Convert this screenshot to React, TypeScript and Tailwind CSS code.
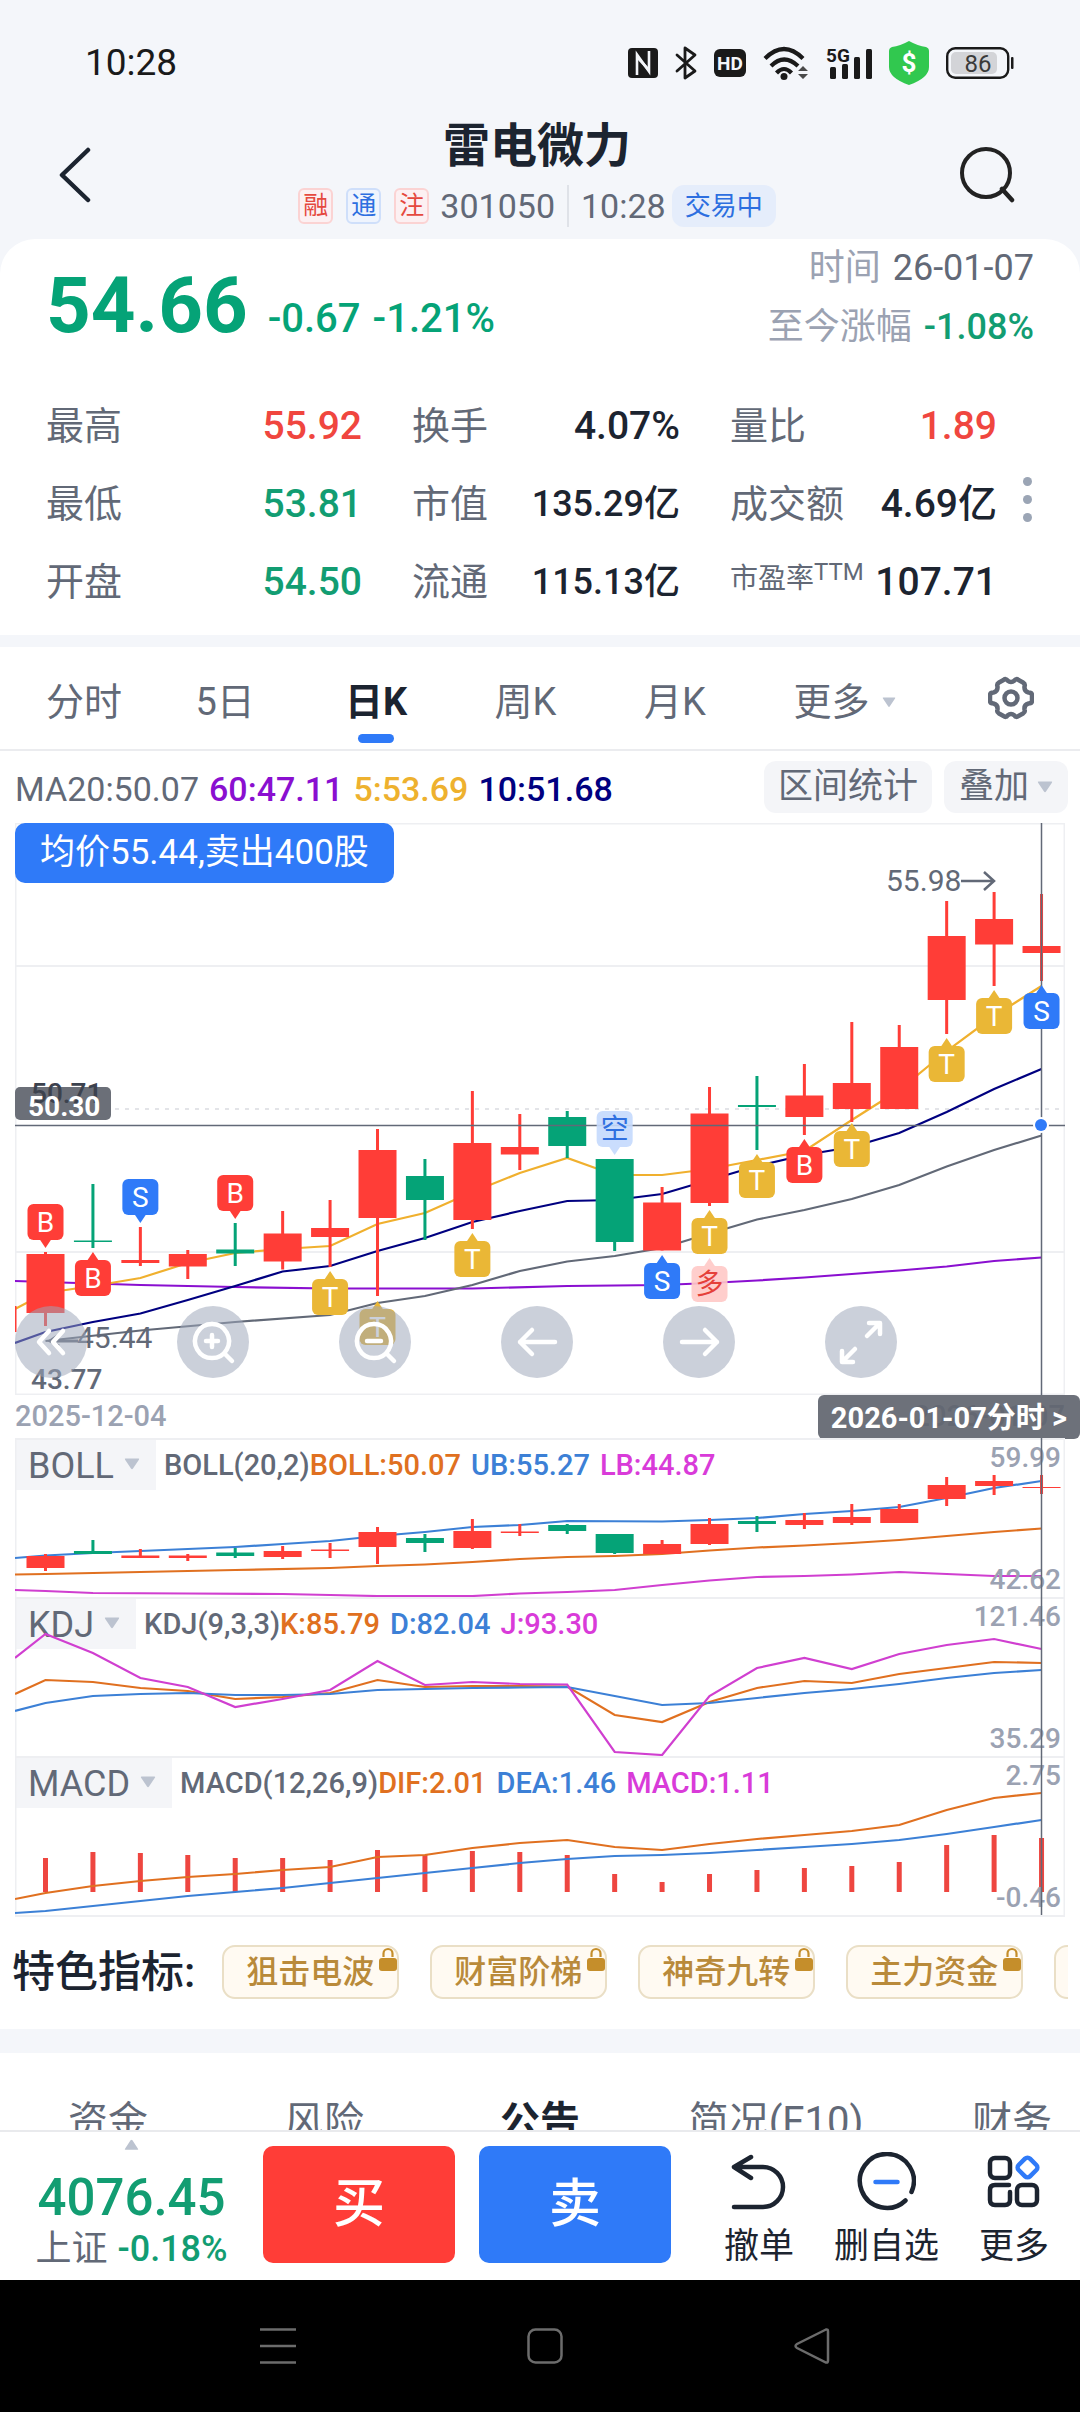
// ============================================================
//  App.tsx — STOCK DETAIL PAGE (daily K-line)
// ============================================================
//
//  • Status bar + title header
//  • Quote card (price, change, key figures)
//  • Period tabs, moving averages, candle chart
//  • BOLL / KDJ / MACD panels
//  • Feature indicators, info tabs, trade bar
//
//  Charts use a 1050-wide viewBox. Candle i sits at x = 30.5 + 47.43 * i.
//
// ============================================================

import { useState } from "react";
import type { ReactNode } from "react";

// ── COLOURS ────────────────────────────────────────────────
const RED = "#ff3d37";
const GREEN = "#05a377";
const BLUE = "#2f7af8";
const GOLD = "#eab736";
const SLATE = "#626977";

// ── CHART DATA ─────────────────────────────────────────────
type Candle = [high: number, top: number, bottom: number, low: number, color: string];
type Point = [index: number, y: number];

// Index of the left chart edge, used to start lines off-screen
const EDGE = -0.643;

const mainCandles: Candle[] = [
  [429, 431, 490, 503, RED],
  [361, 417.5, 419, 425, GREEN],
  [404, 437, 440, 443, RED],
  [427, 431, 443.5, 456, RED],
  [400, 426.5, 430.5, 443, GREEN],
  [388, 410.5, 438.5, 446.5, RED],
  [377, 405, 414, 444, RED],
  [306, 327, 395, 473, RED],
  [336, 353, 377, 417, GREEN],
  [268, 320, 397, 406, RED],
  [291, 324, 331.5, 347, RED],
  [288, 294, 323, 335, GREEN],
  [336, 336, 419, 428, GREEN],
  [364, 379.5, 427.5, 427.5, RED],
  [264, 290.5, 380, 383, RED],
  [253, 282, 284, 327, GREEN],
  [241, 272.5, 294, 312, RED],
  [199, 260, 286, 299, RED],
  [202, 224, 286, 286, RED],
  [78, 113, 177, 211, RED],
  [69, 96, 121.5, 163, RED],
  [71, 123, 130, 158, RED],
];

const ma5: Point[] = [
  [EDGE, 486], [0, 470], [1, 463], [2, 455], [3, 440], [4, 430], [5, 426], [6, 423], [7, 401],
  [8, 390], [9, 369], [10, 350], [11, 335], [12, 352], [13, 352], [14, 346], [15, 337],
  [16, 328], [17, 297], [18, 267], [19, 228], [20, 193], [21, 163],
];
const ma10: Point[] = [
  [EDGE, 520], [0, 509], [1, 499], [2, 490.5], [3, 477], [4, 463], [5, 448.5], [6, 443], [7, 428],
  [8, 415], [9, 399], [10, 388], [11, 378], [12, 377], [13, 371], [14, 357], [15, 343],
  [16, 332], [17, 324], [18, 310], [19, 289], [20, 266], [21, 246],
];
const ma20: Point[] = [
  [0, 518], [2, 507.5], [4, 499], [6, 492], [7, 480], [8, 473], [9, 462], [10, 448], [11, 438.5],
  [12, 433], [13, 425], [14, 410.5], [15, 396.5], [16, 387], [17, 376], [18, 362], [19, 343.5],
  [20, 327], [21, 312.5],
];
const ma60: Point[] = [
  [EDGE, 458], [0, 459], [2, 462], [4, 464], [6, 465.5], [9, 465.5], [11, 463], [13, 462],
  [14, 460], [15, 457.5], [16, 454.5], [17, 451], [18, 447.5], [19, 443.5], [20, 438], [21, 434.5],
];

// Trade markers: which candle, top of the box, letter, pointer side
type Marker = { i: number; y: number; t: string; dir: "up" | "down"; bg: string; fg?: string };
const markers: Marker[] = [
  { i: 0, y: 381, t: "B", dir: "down", bg: RED },
  { i: 1, y: 437, t: "B", dir: "up", bg: RED },
  { i: 2, y: 356, t: "S", dir: "down", bg: BLUE },
  { i: 4, y: 352, t: "B", dir: "down", bg: RED },
  { i: 6, y: 456, t: "T", dir: "up", bg: GOLD },
  { i: 7, y: 486, t: "T", dir: "up", bg: GOLD },
  { i: 9, y: 418, t: "T", dir: "up", bg: GOLD },
  { i: 12, y: 288, t: "空", dir: "down", bg: "#c5dafd", fg: "#2f6fe0" },
  { i: 13, y: 440, t: "S", dir: "up", bg: BLUE },
  { i: 14, y: 395, t: "T", dir: "up", bg: GOLD },
  { i: 14, y: 443, t: "多", dir: "up", bg: "#ffc9c7", fg: "#e5403a" },
  { i: 15, y: 339, t: "T", dir: "up", bg: GOLD },
  { i: 16, y: 324, t: "B", dir: "up", bg: RED },
  { i: 17, y: 308, t: "T", dir: "up", bg: GOLD },
  { i: 19, y: 223, t: "T", dir: "up", bg: GOLD },
  { i: 20, y: 175, t: "T", dir: "up", bg: GOLD },
  { i: 21, y: 170, t: "S", dir: "up", bg: BLUE },
];

const bollCandles: Candle[] = [
  [116, 118, 130, 133, RED],
  [102, 113, 116, 116, GREEN],
  [111, 117.5, 120, 120, RED],
  [116, 117.5, 120, 123, RED],
  [110, 114.5, 118, 120, GREEN],
  [108, 113, 119, 121, RED],
  [105, 111.5, 113, 120, RED],
  [89, 94, 109, 126, RED],
  [96, 100, 105, 114, GREEN],
  [81, 93, 110, 111, RED],
  [86, 93.5, 95, 98, RED],
  [86, 87, 93, 96, GREEN],
  [96, 96, 115, 116, GREEN],
  [102, 106, 116, 116, RED],
  [80, 86, 106, 107, RED],
  [78, 83, 86, 94, GREEN],
  [75, 82, 87, 91, RED],
  [66, 79, 85, 87, RED],
  [66, 71, 85, 85, RED],
  [39, 47, 61, 68, RED],
  [37, 43, 48, 57, RED],
  [37, 49, 50, 56, RED],
];
const bollUp: Point[] = [
  [EDGE, 120], [0, 117.5], [1, 115], [2, 113], [3, 111], [4, 109], [5, 106], [6, 103], [7, 98],
  [8, 94], [9, 89], [10, 87], [11, 83], [13, 83.5], [14, 82], [15, 80], [16, 76], [17, 73],
  [18, 69], [19, 60], [20, 50], [21, 43],
];
const bollMid: Point[] = [
  [EDGE, 136.5], [0, 136], [2, 134], [4, 132], [6, 130], [7, 128], [8, 126.5], [9, 124], [10, 121],
  [11, 119], [12, 118], [13, 116], [14, 112.5], [15, 109.5], [16, 107.5], [17, 105], [18, 102],
  [19, 98], [20, 94], [21, 90.5],
];
const bollLow: Point[] = [
  [EDGE, 152], [0, 153], [1, 155], [3, 155.5], [5, 156], [6, 157], [7, 158], [9, 158], [10, 155.5],
  [11, 154], [12, 152], [13, 147], [14, 142.5], [15, 139], [16, 138], [17, 136.5], [18, 134],
  [19, 136], [20, 138], [21, 138],
];

const kdjJ = [37, 56, 81, 90, 110, 102, 93, 64, 88, 85, 87, 87.5, 155, 158, 99, 71, 61, 72, 57, 48, 42, 52];
const kdjK = [83, 85, 91, 94, 102, 100, 96, 83, 90, 89, 89, 89.5, 118, 125, 105, 91, 84, 86, 77, 71, 65, 66];
const kdjD = [106, 99, 97, 96, 98, 98, 97, 93, 92, 91, 90.5, 90, 99, 108, 106, 101, 96, 92, 87, 81, 76, 73];

const macdBars = [
  102, 96, 97, 99, 102, 102, 104, 94, 99, 95, 96, 99, 118, 126, 118, 114, 112, 110, 106, 89, 79, 82,
];
const macdDif = [
  137, 130, 125, 121, 118, 114, 111, 101, 99, 92, 87, 84, 91, 94, 88, 83, 79, 75, 69, 54, 42, 37,
];
const macdDea = [
  155, 150, 145, 140, 136, 132, 127, 122, 117, 112, 107, 103, 100, 99, 97, 94, 91, 88, 84, 78, 71, 64,
];

// ── HELPERS ────────────────────────────────────────────────
const cx = (i: number) => 30.5 + 47.43 * i;
const toPoints = (pts: Point[]) => pts.map(([i, y]) => `${cx(i).toFixed(1)},${y}`).join(" ");
const fromEdge = (first: number, ys: number[]): Point[] => [
  [EDGE, first],
  ...ys.map((y, i): Point => [i, y]),
];

function Line({ pts, color }: { pts: Point[]; color: string }) {
  return <polyline points={toPoints(pts)} fill="none" stroke={color} strokeWidth="2.2" />;
}

function Candles({ data }: { data: Candle[] }) {
  return (
    <g>
      {data.map(([high, top, bottom, low, color], i) => (
        <g key={i} fill={color}>
          <rect x={cx(i) - 1.5} y={high} width="3" height={low - high} />
          <rect x={cx(i) - 19} y={top} width="38" height={bottom - top} />
        </g>
      ))}
    </g>
  );
}

function Caret({ className }: { className?: string }) {
  return (
    <svg viewBox="0 0 16 12" className={className} aria-hidden="true">
      <path d="M1.5 0.5h13q1.2 0 .4 1.2L9 10.6q-1 1.4-2 0L1.1 1.7Q.3.5 1.5.5z" fill="#bcc3d0" />
    </svg>
  );
}

// ── STATUS BAR ─────────────────────────────────────────────
function StatusBar() {
  return (
    <div className="flex h-[122px] items-center justify-between pl-[85px] pr-[66px] pt-[3px] text-[#1a1a1a]">
      <span className="text-[37px] leading-[40px]">10:28</span>
      <div className="flex items-center gap-[17px]">
        {/* NFC */}
        <svg viewBox="0 0 30 30" className="w-[30px]" aria-label="NFC">
          <rect width="30" height="30" rx="4" fill="#1a1a1a" />
          <path d="M9 27V6.500l12 17V3" fill="none" stroke="#f4f6fa" strokeWidth="2.600" />
          <path d="M9 7l12 13v4L9 11z" fill="#f4f6fa" />
        </svg>
        {/* Bluetooth */}
        <svg viewBox="0 0 22 34" className="w-[22px]" aria-label="Bluetooth">
          <path
            d="M2 9l18 16-10 7V2l10 7L2 25"
            fill="none" stroke="#1a1a1a" strokeWidth="2.8" strokeLinejoin="round" strokeLinecap="round"
          />
        </svg>
        <svg viewBox="0 0 32 28" className="w-[32px]" aria-label="HD">
          <rect width="32" height="28" rx="6" fill="#1a1a1a" />
          <text x="16" y="21" textAnchor="middle" fill="#f4f6fa" className="text-[19px] font-bold">HD</text>
        </svg>
        {/* Wi-Fi */}
        <svg viewBox="0 0 46 34" className="w-[46px]" aria-label="Wi-Fi">
          <g fill="none" stroke="#1a1a1a" strokeWidth="4.200">
            <path d="M2 12.500q19-19 38 0" />
            <path d="M8 20q13-13 27 0" />
            <path d="M13.500 27q7.500-8 15 0" />
          </g>
          <circle cx="21" cy="30.500" r="3.500" fill="#1a1a1a" />
          <path d="M35 25l5-5 5 5zM35 28l5 5 5-5z" fill="#4a4a4a" />
        </svg>
        {/* 5G signal */}
        <svg viewBox="0 0 46 33" className="w-[46px]" aria-label="5G signal">
          <text x="0" y="16" fill="#1a1a1a" className="text-[19px] font-bold">5G</text>
          <g fill="#1a1a1a">
            <rect x="4" y="21" width="6" height="12" rx="1.500" />
            <rect x="16" y="18" width="6" height="15" rx="1.500" />
            <rect x="28" y="11" width="6" height="22" rx="1.500" />
            <rect x="40" y="3" width="6" height="30" rx="1.500" />
          </g>
        </svg>
        {/* Payment shield */}
        <svg viewBox="0 0 40 44" className="w-[40px]" aria-label="Payment protection">
          <path d="M20 0q9 5 17 6 3 1 3 4v16q0 11-20 18Q0 37 0 26V10q0-3 3-4 8-1 17-6z" fill="#31c84f" />
          <text x="20" y="31" textAnchor="middle" fill="#fff" className="text-[26px] font-bold">$</text>
        </svg>
        {/* Battery */}
        <svg viewBox="0 0 68 32" className="w-[68px]" aria-label="Battery 86%">
          <rect x="1.200" y="1.200" width="61" height="29.600" rx="8" fill="none" stroke="#1a1a1a" strokeWidth="2.400" />
          <rect x="5" y="5" width="46" height="22" rx="5" fill="#d3d4d8" />
          <rect x="65" y="10" width="2.500" height="12" rx="1" fill="#1a1a1a" />
          <text x="32" y="24.500" textAnchor="middle" fill="#3a3a3a" className="text-[24px]">86</text>
        </svg>
      </div>
    </div>
  );
}

// ── HEADER ─────────────────────────────────────────────────
function Header() {
  return (
    <header className="grid grid-cols-[1fr_auto_1fr] items-center pb-3 pl-[58px] pr-[64px]">
      <button aria-label="返回" className="justify-self-start">
        <svg viewBox="0 0 34 56" className="w-[34px]">
          <path d="M30 3L4 28l26 25" fill="none" stroke="#1c2430" strokeWidth="4.500" strokeLinecap="round" strokeLinejoin="round" />
        </svg>
      </button>
      <div className="flex flex-col items-center">
        <h1 className="text-[47px] font-bold leading-[48px] text-[#1c2430]">雷电微力</h1>
        <div className="mt-[15px] flex h-[42px] items-center text-[34px] leading-[42px] text-[#626977]">
          <div className="flex gap-[13px] text-[25px] leading-[32px]">
            <span className="rounded-[6px] border-2 border-[#fbd3d3] bg-[#fcf0f2] px-[3px] text-[#e5493f]">融</span>
            <span className="rounded-[6px] border-2 border-[#cfdffa] bg-[#eff4fd] px-[3px] text-[#2d6fe0]">通</span>
            <span className="rounded-[6px] border-2 border-[#fbd3d3] bg-[#fcf0f2] px-[3px] text-[#e5493f]">注</span>
          </div>
          <span className="ml-[11px]">301050</span>
          <span className="mx-[12px] h-[42px] w-[2px] bg-[#dfe2e8]" />
          <span>10:28</span>
          <span className="ml-[6px] rounded-[12px] bg-[#e5edfb] px-[13px] text-[26px] leading-[42px] text-[#2d6fe0]">
            交易中
          </span>
        </div>
      </div>
      <button aria-label="搜索" className="justify-self-end">
        <svg viewBox="0 0 58 56" className="w-[58px]">
          <circle cx="28" cy="26" r="24" fill="none" stroke="#222" strokeWidth="4" />
          <path d="M44 42l10 11" stroke="#222" strokeWidth="4.500" strokeLinecap="round" />
        </svg>
      </button>
    </header>
  );
}

// ── QUOTE CARD ─────────────────────────────────────────────
const stats: { label: ReactNode; value: string; color: string }[] = [
  { label: "最高", value: "55.92", color: "text-[39px] text-[#f0463f]" },
  { label: "换手", value: "4.07%", color: "text-[39px] text-[#1c2430]" },
  { label: "量比", value: "1.89", color: "text-[39px] text-[#f0463f]" },
  { label: "最低", value: "53.81", color: "text-[39px] text-[#129d72]" },
  { label: "市值", value: "135.29亿", color: "text-[36px] text-[#1c2430]" },
  { label: "成交额", value: "4.69亿", color: "text-[39px] text-[#1c2430]" },
  { label: "开盘", value: "54.50", color: "text-[39px] text-[#129d72]" },
  { label: "流通", value: "115.13亿", color: "text-[36px] text-[#1c2430]" },
  {
    label: (
      <span className="flex text-[28px]">
        市盈率<span className="pb-5 text-[24px] leading-[28px]">TTM</span>
      </span>
    ),
    value: "107.71",
    color: "text-[39px] text-[#1c2430]",
  },
];

function QuoteCard() {
  return (
    <section className="rounded-t-[35px] bg-white pb-[14px]">
      <div className="flex h-[148px] justify-between px-[46px]">
        <div className="flex items-baseline pt-[27px] text-[#05a377]">
          <span className="text-[78px] font-bold leading-[80px]">54.66</span>
          <span className="ml-[20px] text-[40px] font-medium">-0.67</span>
          <span className="ml-[12px] text-[40px] font-medium">-1.21%</span>
        </div>
        <dl className="text-right text-[36px] leading-[59px]">
          <div className="flex justify-end gap-[12px]">
            <dt className="text-[#9ba2b2]">时间</dt>
            <dd className="text-[#626977]">26-01-07</dd>
          </div>
          <div className="flex justify-end gap-[12px]">
            <dt className="text-[#9ba2b2]">至今涨幅</dt>
            <dd className="font-medium text-[#129d72]">-1.08%</dd>
          </div>
        </dl>
      </div>

      <div className="flex items-center">
        <dl className="grid flex-1 grid-cols-[316fr_268fr_267fr] gap-x-[50px] pl-[46px]">
          {stats.map((s, i) => (
            <div key={i} className="flex h-[78px] items-center justify-between whitespace-nowrap">
              <dt className="text-[38px] text-[#626977]">{s.label}</dt>
              <dd className={`font-medium ${s.color}`}>{s.value}</dd>
            </div>
          ))}
        </dl>
        <button aria-label="更多指标" className="flex w-[83px] flex-col gap-[9px] pb-[9px] pl-[26px]">
          <span className="size-[9px] rounded-full bg-[#9ba5b5]" />
          <span className="size-[9px] rounded-full bg-[#9ba5b5]" />
          <span className="size-[9px] rounded-full bg-[#9ba5b5]" />
        </button>
      </div>
    </section>
  );
}

// ── PERIOD TABS ────────────────────────────────────────────
const periods = ["分时", "5日", "日K", "周K", "月K", "更多"];

function PeriodTabs() {
  const [active, setActive] = useState("日K");
  return (
    <nav className="flex h-[104px] items-center border-b-2 border-[#ebecef] bg-white pl-[46px]">
      <div className="grid h-full flex-1 grid-cols-6">
        {periods.map((p) => (
          <button
            key={p}
            onClick={() => setActive(p)}
            className={
              active === p
                ? "flex items-center text-[38px] font-bold text-[#1c2430]"
                : "flex items-center text-[38px] text-[#626977]"
            }
          >
            <span className="relative flex h-full items-center whitespace-nowrap pt-[8px]">
              {p}
              {p === "更多" && <Caret className="ml-[12px] w-[14px]" />}
              {active === p && (
                <span className="absolute bottom-[6px] left-1/2 h-[9px] w-[36px] -translate-x-1/2 rounded-[5px] bg-[#2f7af8]" />
              )}
            </span>
          </button>
        ))}
      </div>
      <button aria-label="设置" className="w-[137px] pl-[45px]">
        <svg viewBox="0 0 46 44" className="w-[46px]">
          <path
            d="M15.500 4Q18 2 19.500 4.500 23 7.500 26.500 4.500 28 2 30.500 4L35 6.500q2.500 1.500 1.500 4-.5 5 4 6 3.500 0 3.500 3v5q0 3-3.500 3-4.500 1-4 6 1 2.500-1.500 4L30.500 40q-2.500 2-4-.5-3.500-3-7 0-1.500 2.500-4 .5L11 37.500q-2.500-1.500-1.500-4 .5-5-4-6-3.500 0-3.500-3v-5q0-3 3.500-3 4.500-1 4-6-1-2.500 1.500-4z"
            fill="none" stroke={SLATE} strokeWidth="4.500" strokeLinejoin="round"
          />
          <circle cx="23" cy="22" r="6.500" fill="none" stroke={SLATE} strokeWidth="4.500" />
        </svg>
      </button>
    </nav>
  );
}

// ── MAIN CHART ─────────────────────────────────────────────
const chartTools = [
  { name: "最早", d: "M34 25L24 36l10 11M48 25L38 36l10 11" },
  { name: "放大", d: "M35 18a17 17 0 1 0 .01 0M48 48l7 7M35 29v12M29 35h12" },
  { name: "缩小", d: "M35 18a17 17 0 1 0 .01 0M48 48l7 7M28 35h14" },
  { name: "左移", d: "M54 36H19M31 24L19 36l12 12" },
  { name: "右移", d: "M19 36h35M42 24l12 12-12 12" },
  { name: "全屏", d: "M42 30l12-12M44 17h11v11M30 43L18 55M17 45v11h11" },
];

function MainChart() {
  return (
    <div className="relative">
      <svg viewBox="0 0 1050 572" className="block w-full">
        {/* Frame and grid */}
        <rect x="0.500" y="0.500" width="1049" height="571" fill="none" stroke="#eeeff2" strokeWidth="2" />
        <path d="M0 143h1050M0 429h1050" stroke="#eeeff2" strokeWidth="2" />
        <path d="M0 286h1050" stroke="#e3e4e8" strokeWidth="2" strokeDasharray="4 6" />

        <Line pts={ma60} color="#8a0fd0" />
        <Line pts={ma20} color={SLATE} />
        <Line pts={ma10} color="#000080" />
        <Line pts={ma5} color="#f0b02e" />
        <rect x="0" y="483" width="1.500" height="26" fill={RED} />
        <Candles data={mainCandles} />

        {/* Price labels */}
        <g fill={SLATE} className="text-[28px] font-medium">
          <text x="16" y="566">43.77</text>
        </g>
        <g fill={SLATE} className="text-[30px]">
          <text x="62" y="525">45.44</text>
          <text x="871" y="68">55.98</text>
        </g>
        <path d="M36 518h27M44 512l-9 6 9 5" fill="none" stroke={SLATE} strokeWidth="3" />
        <path d="M946 58h33M969 49l10 9-10 9" fill="none" stroke={SLATE} strokeWidth="2.500" />

        {/* Crosshair */}
        <path d="M0 302.500h1050M1026.500 0v572" stroke={SLATE} strokeWidth="1.500" />
        <circle cx="1026" cy="302" r="8" fill="#fff" />
        <circle cx="1026" cy="302" r="6" fill={BLUE} />
        <rect x="0" y="264" width="96" height="33" rx="5" fill="#6b6f78" />
        <text x="16" y="280" fill="#3c424e" className="text-[28px] font-medium">50.71</text>
        <text x="13" y="293" fill="#fff" className="text-[28px] font-bold">50.30</text>

        {/* Trade markers */}
        {markers.map((m) => {
          const x = cx(m.i);
          const tip = m.dir === "up"
            ? `M${x - 6} ${m.y + 1}l6 -9l6 9z`
            : `M${x - 6} ${m.y + 35}l6 9l6 -9z`;
          return (
            <g key={`${m.i}-${m.t}`}>
              <g fill={m.bg} opacity={m.fg ? 0.9 : 1}>
                <rect x={x - 18} y={m.y} width="36" height="36" rx="6" />
                <path d={tip} />
              </g>
              <text x={x} y={m.y + 28} textAnchor="middle" fill={m.fg ?? "#fff"} className="text-[28px]">
                {m.t}
              </text>
            </g>
          );
        })}
      </svg>

      {/* Trade summary */}
      <div className="absolute left-0 top-0 rounded-[10px] bg-[#2f7af8] px-[25px] text-[35px] leading-[60px] text-white">
        均价55.44,卖出400股
      </div>

      {/* Floating tools */}
      <div className="absolute bottom-[17px] left-0 flex gap-[90px]">
        {chartTools.map((t) => (
          <button key={t.name} aria-label={t.name} className="size-[72px] rounded-full bg-[#9da6b9]/53">
            <svg viewBox="0 0 72 72">
              <path d={t.d} fill="none" stroke="#fff" strokeWidth="4.500" strokeLinecap="round" strokeLinejoin="round" />
            </svg>
          </button>
        ))}
      </div>
    </div>
  );
}

// ── INDICATOR PANELS ───────────────────────────────────────
type PanelProps = {
  name: string;
  params: string;
  values: [string, string, string];
  max: string;
  min: string;
  children: ReactNode;
};

function Panel({ name, params, values, max, min, children }: PanelProps) {
  const [indicator, setIndicator] = useState(name);
  return (
    <div className="relative">
      <div className="absolute left-0 top-0 flex h-[52px] items-center">
        <label className="flex h-full items-center bg-[#f4f5f8] pl-[13px] pr-[16px]">
          <select
            aria-label="指标"
            value={indicator}
            onChange={(e) => setIndicator(e.target.value)}
            className="field-sizing-content appearance-none pt-[3px] text-[36px] text-[#626977]"
          >
            <option>BOLL</option>
            <option>KDJ</option>
            <option>MACD</option>
          </select>
          <Caret className="ml-[10px] w-[16px]" />
        </label>
        <div className="flex pl-[8px] pt-[4px] text-[29px] font-medium">
          <span className="text-[#626977]">{params}</span>
          <span className="text-[#e07020]">{values[0]}</span>
          <span className="ml-[10px] text-[#3c80d6]">{values[1]}</span>
          <span className="ml-[10px] text-[#d93bd9]">{values[2]}</span>
        </div>
      </div>
      <svg viewBox="0 0 1050 159" className="pointer-events-none relative block w-full">
        <path d="M0 1h1050M0.500 0v159M1049.500 0v159" stroke="#eeeff2" strokeWidth="2" />
        {children}
        <g fill="#9ba2b2" textAnchor="end" className="text-[28px] font-medium">
          <text x="1046" y="29">{max}</text>
          <text x="1046" y="151">{min}</text>
        </g>
        <path d="M1026.500 0v159" stroke={SLATE} strokeWidth="1.500" />
      </svg>
    </div>
  );
}

function Panels() {
  return (
    <div className="border-b-2 border-[#eeeff2]">
      <Panel name="BOLL" params="BOLL(20,2)" values={["BOLL:50.07", "UB:55.27", "LB:44.87"]} max="59.99" min="42.62">
        <Line pts={bollUp} color="#3c80d6" />
        <Line pts={bollMid} color="#e07020" />
        <Line pts={bollLow} color="#d03fd0" />
        <Candles data={bollCandles} />
      </Panel>
      <Panel name="KDJ" params="KDJ(9,3,3)" values={["K:85.79", "D:82.04", "J:93.30"]} max="121.46" min="35.29">
        <Line pts={fromEdge(97, kdjK)} color="#e07020" />
        <Line pts={fromEdge(114, kdjD)} color="#3c80d6" />
        <Line pts={fromEdge(61, kdjJ)} color="#d03fd0" />
      </Panel>
      <Panel name="MACD" params="MACD(12,26,9)" values={["DIF:2.01", "DEA:1.46", "MACD:1.11"]} max="2.75" min="-0.46">
        {macdBars.map((top, i) => (
          <rect key={i} x={cx(i) - 2.5} y={top} width="5" height={136 - top} fill="#ee4640" />
        ))}
        <Line pts={fromEdge(143, macdDif)} color="#e07020" />
        <Line pts={fromEdge(157, macdDea)} color="#3c80d6" />
      </Panel>
    </div>
  );
}

function ChartSection() {
  return (
    <section className="bg-white px-[15px]">
      <div className="flex h-[72px] items-center justify-between text-[34px]">
        <div className="flex gap-[10px] pt-[4px] font-medium">
          <span className="font-normal text-[#626977]">MA20:50.07</span>
          <span className="text-[#8a0fd0]">60:47.11</span>
          <span className="text-[#eeb12e]">5:53.69</span>
          <span className="text-[#000080]">10:51.68</span>
        </div>
        <div className="-mr-[3px] flex gap-[12px] text-[35px] leading-[52px] text-[#626977]">
          <button className="rounded-[12px] bg-[#f4f5f8] px-[14px]">区间统计</button>
          <button className="flex items-center rounded-[12px] bg-[#f4f5f8] px-[15px]">
            叠加
            <Caret className="ml-[8px] w-[16px]" />
          </button>
        </div>
      </div>

      <MainChart />

      {/* Date axis, with the crosshair date over its right end */}
      <div className="relative flex h-[43px] items-center justify-between text-[29px] font-medium text-[#9ba2b2]">
        <span>2025-12-04</span>
        <span>2026-01-07</span>
        <button className="absolute -right-[15px] top-0 rounded-[6px] bg-[#5d626c]/90 px-[13px] pt-[2px] text-[29px] font-bold leading-[42px] text-white">
          2026-01-07分时 &gt;
        </button>
      </div>

      <Panels />
    </section>
  );
}

// ── FEATURE INDICATORS ─────────────────────────────────────
const features = ["狙击电波", "财富阶梯", "神奇九转", "主力资金", "多空趋势"];

function Features() {
  return (
    <section className="flex h-[112px] items-center bg-white px-3 pb-[2px]">
      <h2 className="shrink-0 text-[43px] font-medium text-[#1c2430]">特色指标:</h2>
      <div className="ml-[27px] flex flex-1 gap-[31px] overflow-hidden">
        {features.map((f) => (
          <button
            key={f}
            className="relative h-[54px] w-[177px] shrink-0 rounded-[13px] border-2 border-[#eadfc6] bg-[#fffaf2] pl-[22px] text-left text-[32px] font-medium leading-[48px] text-[#b98a3a]"
          >
            {f}
            <svg viewBox="0 0 18 24" className="absolute right-0 top-0 w-[18px]">
              <rect y="11" width="18" height="13" rx="3" fill="#c58e2b" />
              <path d="M4.500 10V6.500a4.500 4.500 0 0 1 9 0V10" fill="none" stroke="#c58e2b" strokeWidth="2.200" />
            </svg>
          </button>
        ))}
      </div>
    </section>
  );
}

// ── INFO TABS ──────────────────────────────────────────────
function InfoTabs() {
  return (
    <nav className="flex h-[77px] overflow-hidden bg-white pt-[49px] text-[40px] leading-[40px] text-[#626977]">
      <button className="w-[216px] shrink-0">资金</button>
      <button className="w-[216px] shrink-0">风险</button>
      <button className="w-[216px] shrink-0 font-bold text-[#1c2430]">公告</button>
      <button className="w-[256px] shrink-0">简况(F10)</button>
      <button className="w-[216px] shrink-0">财务</button>
    </nav>
  );
}

// ── TRADE BAR ──────────────────────────────────────────────
function TradeBar() {
  return (
    <footer className="relative flex h-[150px] border-t-2 border-[#e9eaed] bg-white">
      <Caret className="absolute left-[124px] top-[7px] w-[15px] rotate-180" />
      <div className="flex w-[263px] flex-col items-center pt-[40px]">
        <span className="text-[51px] font-medium leading-[52px] text-[#129d72]">4076.45</span>
        <span className="flex gap-[10px] text-[36px] leading-[50px]">
          <span className="text-[#626977]">上证</span>
          <span className="font-medium text-[#129d72]">-0.18%</span>
        </span>
      </div>
      <div className="flex flex-1 gap-[24px] pb-[17px] pt-[14px] text-[52px] font-medium text-white">
        <button className="flex-1 rounded-[10px] bg-[#ff3d37]">买</button>
        <button className="flex-1 rounded-[10px] bg-[#2f7af8]">卖</button>
      </div>
      <div className="flex gap-10 pl-[53px] pr-[31px] pt-[20px] text-[35px] leading-[40px] text-[#1c2430]">
        <button className="flex flex-col items-center gap-[15px]">
          <svg viewBox="0 0 58 60" className="w-[58px]">
            <path
              d="M21 5L4 15l17 11M5 15h28a20 20 0 0 1 0 40H4"
              fill="none" stroke="#1c2430" strokeWidth="4.500" strokeLinejoin="round" strokeLinecap="round"
            />
          </svg>
          撤单
        </button>
        <button className="flex flex-col items-center gap-[15px]">
          <svg viewBox="0 0 60 60" className="w-[60px]" fill="none" strokeWidth="4.500" strokeLinecap="round">
            <path d="M49.500 48.500A27 27 0 1 1 55.500 40" stroke="#1c2430" />
            <path d="M19.500 30h22" stroke={BLUE} />
          </svg>
          删自选
        </button>
        <button className="flex flex-col items-center gap-[15px]">
          <svg viewBox="0 0 56 60" className="w-[56px]" fill="none" strokeWidth="4.500" strokeLinecap="round">
            <g stroke="#1c2430">
              <rect x="4" y="6" width="20" height="20" rx="5" />
              <rect x="31" y="33" width="20" height="20" rx="5" />
              <path d="M23 33H9q-5 0-5 5v10q0 5 5 5h10q5 0 5-5v-8" />
            </g>
            <rect x="33.500" y="7.500" width="16" height="16" rx="3.500" transform="rotate(45 41.500 15.500)" stroke={BLUE} />
          </svg>
          更多
        </button>
      </div>
    </footer>
  );
}

// ── SYSTEM NAVIGATION ──────────────────────────────────────
function SystemNav() {
  return (
    <div className="flex h-[132px] items-center justify-between bg-black pl-[260px] pr-[250px]">
      <button aria-label="最近任务">
        <svg viewBox="0 0 36 36" className="w-[36px]">
          <path d="M0 1.500h36M0 18h36M0 34.500h36" stroke="#6c6c6c" strokeWidth="2.500" />
        </svg>
      </button>
      <button aria-label="主屏幕">
        <svg viewBox="0 0 36 36" className="w-[36px]">
          <rect x="1.500" y="1.500" width="33" height="33" rx="7" fill="none" stroke="#6c6c6c" strokeWidth="2.500" />
        </svg>
      </button>
      <button aria-label="返回上一级">
        <svg viewBox="0 0 36 36" className="w-[36px]">
          <path d="M32 1.500L3 16q-3 2 0 4l29 14.500q2 .5 2-2v-29q0-2.500-2-2z" fill="none" stroke="#6c6c6c" strokeWidth="2.500" />
        </svg>
      </button>
    </div>
  );
}

// ── PAGE ───────────────────────────────────────────────────
export default function App() {
  return (
    <div className="overflow-x-hidden bg-[#f4f6fa] font-['Roboto','Noto_Sans_CJK_SC',sans-serif]">
      <StatusBar />
      <Header />
      <QuoteCard />
      <div className="h-[12px]" />
      <PeriodTabs />
      <ChartSection />
      <Features />
      <div className="h-[24px]" />
      <InfoTabs />
      <TradeBar />
      <SystemNav />
    </div>
  );
}
